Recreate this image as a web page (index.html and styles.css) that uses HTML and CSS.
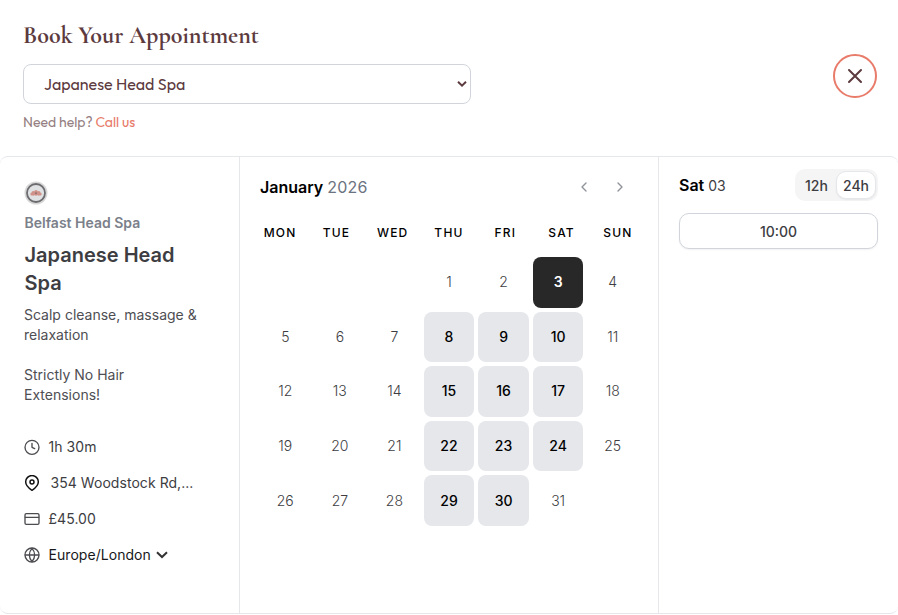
FILE: index.html
```html
<!DOCTYPE html>
<html lang="en">
<head>
    <meta charset="UTF-8">
    <meta name="viewport" content="width=device-width, initial-scale=1.0">
    <title>Book Your Appointment</title>
    <link rel="stylesheet" href="styles.css">
</head>
<body>
    <header class="modal-header">
        <div class="header-left">
            <h1>Book Your Appointment</h1>
            <div class="select">
                <span class="select-text">Japanese Head Spa</span>
                <svg width="10" height="6" viewBox="0 0 10 6" fill="none" stroke="#5c3a3e" stroke-width="2"><path d="M1 0.8l4 3.8 4-3.8"/></svg>
            </div>
            <p class="help"><span class="help-text">Need help?</span> <a href="#">Call us</a></p>
        </div>
        <button class="close" aria-label="Close">
            <svg width="24" height="24" viewBox="0 0 24 24" fill="none" stroke="#5c3a3e" stroke-width="2" stroke-linecap="round"><path d="M18 6L6 18M6 6l12 12"/></svg>
        </button>
    </header>

    <main class="booker">
        <aside class="details">
            <svg class="avatar" width="24" height="24" viewBox="0 0 24 24">
                <circle cx="12" cy="12" r="11.5" fill="#d9d8d8"/>
                <circle cx="12" cy="12" r="9" fill="#dfe1e2" stroke="#6c6c70" stroke-width="1.8"/>
                <g fill="#cf9188">
                    <ellipse cx="12" cy="11.8" rx="1.9" ry="2.9"/>
                    <ellipse cx="9.4" cy="12.3" rx="1.9" ry="2.4"/>
                    <ellipse cx="14.6" cy="12.3" rx="1.9" ry="2.4"/>
                    <ellipse cx="7.8" cy="12.9" rx="1.5" ry="1.5"/>
                    <ellipse cx="16.2" cy="12.9" rx="1.5" ry="1.5"/>
                </g>
                <circle cx="12" cy="12.2" r="0.9" fill="#8d6b6b"/>
            </svg>
            <p class="owner">Belfast Head Spa</p>
            <h2>Japanese Head Spa</h2>
            <div class="description">
                <p>Scalp cleanse, massage &amp; relaxation</p>
                <p>Strictly No Hair Extensions!</p>
            </div>
            <ul class="meta">
                <li>
                    <svg class="icon" viewBox="0 0 24 24"><circle cx="12" cy="12.5" r="10.5"/><path d="M12 6.5v6l4 2"/></svg>
                    <span>1h 30m</span>
                </li>
                <li class="location">
                    <svg class="icon" viewBox="0 0 24 24"><path d="M21.5 10.3c0 6.7-9.5 12.7-9.5 12.7s-9.5-6-9.5-12.7a9.5 9.5 0 0 1 19 0z"/><circle cx="12" cy="10.5" r="3"/></svg>
                    <span>354 Woodstock Rd,...</span>
                </li>
                <li>
                    <svg class="icon" viewBox="0 0 24 24"><rect x="1.5" y="4" width="21" height="16" rx="2"/><path d="M2 9.5h20"/></svg>
                    <span>£45.00</span>
                </li>
                <li class="timezone">
                    <svg class="icon" viewBox="0 0 24 24"><circle cx="12" cy="12" r="10.5"/><path d="M2 12h20M12 2a15 15 0 0 1 4 10 15 15 0 0 1-4 10 15 15 0 0 1-4-10 15 15 0 0 1 4-10z"/></svg>
                    <span>Europe/London</span>
                    <svg class="chevron" width="12" height="8" viewBox="0 0 12 8"><path d="M1 1.2l5 4.8 5-4.8"/></svg>
                </li>
            </ul>
        </aside>

        <section class="calendar">
            <div class="calendar-header">
                <h3>January <span>2026</span></h3>
                <div class="nav">
                    <svg viewBox="0 0 24 24"><path d="M15 18l-6-6 6-6"/></svg>
                    <svg viewBox="0 0 24 24"><path d="M9 18l6-6-6-6"/></svg>
                </div>
            </div>
            <div class="weekdays">
                <div>MON</div><div>TUE</div><div>WED</div><div>THU</div><div>FRI</div><div>SAT</div><div>SUN</div>
            </div>
            <div class="days">
                <div class="day first">1</div>
                <div class="day">2</div>
                <div class="day selected">3</div>
                <div class="day">4</div>
                <div class="day">5</div>
                <div class="day">6</div>
                <div class="day">7</div>
                <div class="day open">8</div>
                <div class="day open">9</div>
                <div class="day open">10</div>
                <div class="day">11</div>
                <div class="day">12</div>
                <div class="day">13</div>
                <div class="day">14</div>
                <div class="day open">15</div>
                <div class="day open">16</div>
                <div class="day open">17</div>
                <div class="day">18</div>
                <div class="day">19</div>
                <div class="day">20</div>
                <div class="day">21</div>
                <div class="day open">22</div>
                <div class="day open">23</div>
                <div class="day open">24</div>
                <div class="day">25</div>
                <div class="day">26</div>
                <div class="day">27</div>
                <div class="day">28</div>
                <div class="day open">29</div>
                <div class="day open">30</div>
                <div class="day">31</div>
            </div>
        </section>

        <section class="slots">
            <div class="slots-header">
                <h3>Sat <span>03</span></h3>
                <div class="toggle">
                    <button>12h</button>
                    <button class="active">24h</button>
                </div>
            </div>
            <button class="slot">10:00</button>
        </section>
    </main>
</body>
</html>
```

FILE: styles.css
```css
* {
    box-sizing: border-box;
    margin: 0;
    padding: 0;
}

body {
    font-family: Inter, sans-serif;
    font-size: 14px;
    line-height: 20px;
    color: #3d3d42;
    background-color: #fff;
    height: 615px;
    overflow: hidden;
}

button {
    font-family: inherit;
    border: none;
    cursor: pointer;
}

.modal-header {
    height: 156px;
    padding: 20px 21px 0 23px;
    display: flex;
    justify-content: space-between;
}

.header-left {
    width: 448px;
}

h1 {
    font-family: "Cormorant Garamond", "Liberation Serif", serif;
    font-size: 24px;
    font-weight: 700;
    line-height: 32px;
    color: #5c3a3e;
    white-space: nowrap;
}

.select {
    height: 40px;
    margin-top: 12px;
    padding: 0 3px 0 20px;
    border: 1px solid #d1d5db;
    border-radius: 8px;
    display: flex;
    align-items: center;
    justify-content: space-between;
    font-family: Outfit, Lato, sans-serif;
    font-size: 16px;
    font-weight: 400;
    color: #5c3a3e;
}

.help {
    margin-top: 8px;
    font-family: Outfit, Lato, sans-serif;
    font-size: 14px;
    font-weight: 400;
    color: #957f82;
}

.help a {
    color: #e87b69;
    text-decoration: none;
}

.close {
    width: 44px;
    height: 44px;
    margin-top: 34px;
    border: 2px solid #e87b69;
    border-radius: 50%;
    background-color: #fff;
    display: flex;
    align-items: center;
    justify-content: center;
}

.booker {
    height: 458px;
    border: 1px solid #e5e7eb;
    border-left: none;
    border-right: none;
    border-radius: 8px;
    display: grid;
    grid-template-columns: 239px 420px 1fr;
}

.details {
    padding: 24px 24px 0;
}

.avatar {
    display: block;
}

.owner {
    margin-top: 8px;
    padding-left: 0.5px;
    font-weight: 600;
    color: #7b808a;
}

h2 {
    margin-top: 8px;
    padding-left: 0.5px;
    font-size: 20px;
    font-weight: 600;
    line-height: 28px;
    color: #3d3d42;
}

.description {
    margin-top: 8px;
    color: #4e4e53;
}

.description p + p {
    margin-top: 20px;
    padding-right: 60px;
}

.meta {
    margin-top: 32px;
    list-style: none;
    font-weight: 400;
    letter-spacing: 0.05px;
    color: #3d3d42;
}

.meta li {
    height: 20px;
    margin-bottom: 16px;
    display: flex;
    align-items: center;
    gap: 8.5px;
    white-space: nowrap;
}

.icon {
    width: 16px;
    height: 16px;
    fill: none;
    stroke: #4b4b50;
    stroke-width: 2;
    stroke-linecap: round;
    stroke-linejoin: round;
}

.location .icon {
    stroke: #111;
    stroke-width: 2.2;
}

.meta .location {
    gap: 10.5px;
}

.meta .timezone {
    color: #18181b;
}

.chevron {
    margin-left: -3px;
    fill: none;
    stroke: #333;
    stroke-width: 2;
}

.calendar {
    padding: 20px 20px 0;
    border-left: 1px solid #e5e7eb;
    border-right: 1px solid #e5e7eb;
}

.calendar-header {
    height: 20px;
    display: flex;
    align-items: center;
    justify-content: space-between;
}

h3 {
    font-size: 16px;
    font-weight: 600;
    color: #000;
}

.calendar-header span {
    font-weight: 400;
    letter-spacing: 0.2px;
    color: #6b7280;
}

.nav {
    display: flex;
    gap: 20px;
    margin-right: 10px;
}

.nav svg {
    width: 16px;
    height: 16px;
    fill: none;
    stroke: #8e9299;
    stroke-width: 2;
    stroke-linecap: round;
    stroke-linejoin: round;
}

.weekdays {
    margin: 28px -8px 0;
    display: grid;
    grid-template-columns: repeat(7, 1fr);
    font-size: 12px;
    font-weight: 500;
    line-height: 16px;
    letter-spacing: 1.2px;
    text-align: center;
    color: #000;
}

.days {
    margin-top: 16px;
    display: grid;
    grid-template-columns: repeat(7, 1fr);
    grid-auto-rows: 50.6px;
    gap: 4px;
}

.day {
    display: flex;
    align-items: center;
    justify-content: center;
    border-radius: 8px;
    font-weight: 300;
    color: #3d3d42;
}

.first {
    grid-column-start: 4;
}

.open {
    background-color: #e5e7eb;
    font-weight: 500;
    color: #000;
}

.selected {
    background-color: #282828;
    font-weight: 600;
    color: #fff;
}

.slots {
    padding: 12px 20px 0;
}

.slots-header {
    height: 32px;
    display: flex;
    align-items: center;
    justify-content: space-between;
}

.slots-header span {
    font-size: 14px;
    font-weight: 400;
    color: #3d3d42;
}

.toggle {
    height: 32px;
    padding: 2px;
    border-radius: 10px;
    background-color: #f5f5f5;
    display: flex;
}

.toggle button {
    width: 39px;
    height: 28px;
    border-radius: 10px;
    background: none;
    font-size: 14px;
    font-weight: 500;
    color: #3d3d42;
}

.toggle .active {
    width: 40px;
    background-color: #fff;
    border: 1px solid #e5e7eb;
    box-shadow: 0 1px 2px rgba(0, 0, 0, 0.06);
}

.slot {
    width: 100%;
    height: 36px;
    margin-top: 12px;
    border: 1px solid #d1d5db;
    border-radius: 10px;
    background-color: #fff;
    box-shadow: 0 1px 2px rgba(0, 0, 0, 0.06);
    font-size: 14px;
    font-weight: 500;
    color: #3d3d42;
}
```
